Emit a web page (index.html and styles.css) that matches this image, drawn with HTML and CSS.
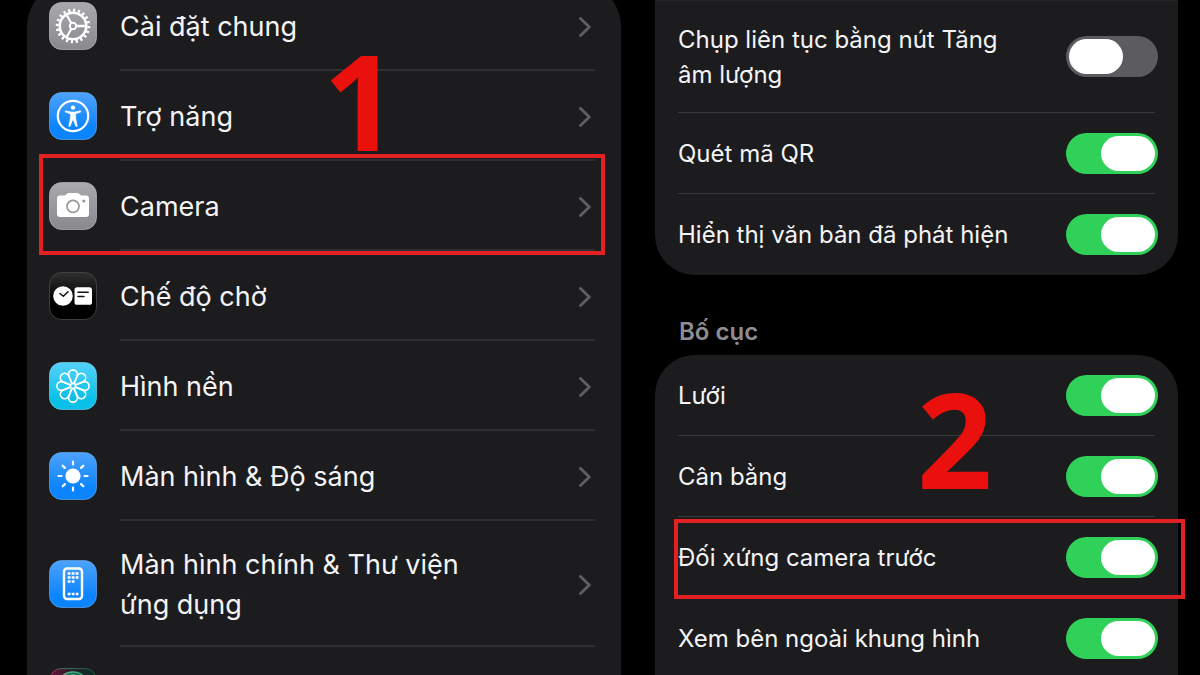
FILE: index.html
```html
<!DOCTYPE html>
<html lang="vi">
<head>
<meta charset="utf-8">
<meta name="viewport" content="width=device-width, initial-scale=1">
<title>Cài đặt Camera</title>
<link rel="stylesheet" href="styles.css">
</head>
<body>
<svg class="defs" width="0" height="0" aria-hidden="true">
  <defs>
    <linearGradient id="gray" x1="0" y1="0" x2="0" y2="1"><stop offset="0" stop-color="#a9a9ae"/><stop offset="1" stop-color="#88888d"/></linearGradient>
    <linearGradient id="blue" x1="0" y1="0" x2="0" y2="1"><stop offset="0" stop-color="#4da3fb"/><stop offset="0.75" stop-color="#0b84fe"/></linearGradient>
    <linearGradient id="cyan" x1="0" y1="0" x2="0" y2="1"><stop offset="0" stop-color="#55d2fa"/><stop offset="0.8" stop-color="#08c0e8"/></linearGradient>
    <linearGradient id="black" x1="0" y1="0" x2="0" y2="1"><stop offset="0" stop-color="#303031"/><stop offset="0.6" stop-color="#000"/></linearGradient>
    <linearGradient id="siri" x1="0" y1="0" x2="1" y2="0"><stop offset="0" stop-color="#6b0f38"/><stop offset="0.5" stop-color="#24222a"/><stop offset="1" stop-color="#0c2a26"/></linearGradient>
    <linearGradient id="glow" x1="0" y1="0" x2="1" y2="0"><stop offset="0" stop-color="#d0537c"/><stop offset="0.35" stop-color="#4fb98b"/><stop offset="1" stop-color="#1c9468"/></linearGradient>
    <symbol id="chevron" viewBox="0 0 12 20"><path d="M1.500 1.500L10.300 10L1.500 18.500" fill="none" stroke="#5f5f63" stroke-width="2.900" stroke-linecap="round" stroke-linejoin="round"/></symbol>
  </defs>
</svg>
<main class="screens">
  <nav class="card card-menu" aria-label="Cài đặt">
    <a class="item" href="#general">
      <svg class="icon" viewBox="0 0 48 48" aria-hidden="true">
        <rect x=".5" y=".5" width="47" height="47" rx="12" fill="url(#gray)" stroke="#b9b9be" stroke-opacity=".7"/>
        <g fill="none" stroke="#fff">
          <circle cx="24" cy="24" r="15.800" stroke-width="3" pathLength="40" stroke-dasharray="0.900 1.100"/>
          <circle cx="24" cy="24" r="13.300" stroke-width="2.600"/>
          <circle cx="24" cy="24" r="3.200" stroke-width="2"/>
          <path d="M27.500 24H37M22.200 21L17.500 12.800M22.200 27L17.500 35.200" stroke-width="2.300"/>
        </g>
      </svg>
      <span class="item-body"><span class="item-label">Cài đặt chung</span><svg class="chevron" aria-hidden="true"><use href="#chevron"/></svg></span>
    </a>
    <a class="item" href="#accessibility">
      <svg class="icon" viewBox="0 0 48 48" aria-hidden="true">
        <rect x=".5" y=".5" width="47" height="47" rx="12" fill="url(#blue)" stroke="#6cb3fb" stroke-opacity=".6"/>
        <circle cx="24" cy="24" r="15.200" fill="none" stroke="#fff" stroke-width="2.200"/>
        <circle cx="24" cy="15.600" r="2.200" fill="#fff"/>
        <path d="M16.500 18.800L22.300 20H25.700L31.500 18.800L31.800 20L26.600 21.800V26L28.300 34.200L27 34.500L24.300 27.800H23.700L21 34.500L19.700 34.200L21.400 26V21.800L16.200 20Z" fill="#fff" stroke="#fff" stroke-width=".6" stroke-linejoin="round"/>
      </svg>
      <span class="item-body"><span class="item-label">Trợ năng</span><svg class="chevron" aria-hidden="true"><use href="#chevron"/></svg></span>
    </a>
    <a class="item item-marked" href="#camera">
      <svg class="icon" viewBox="0 0 48 48" aria-hidden="true">
        <rect x=".5" y=".5" width="47" height="47" rx="12" fill="url(#gray)" stroke="#b9b9be" stroke-opacity=".7"/>
        <path d="M11 13.500H15.500C17 13.500 17.600 11 19.500 11H28.500C30.400 11 31 13.500 32.500 13.500H37Q40 13.500 40 16.500V32Q40 35 37 35H11Q8 35 8 32V16.500Q8 13.500 11 13.500Z" fill="#fff"/>
        <circle cx="24" cy="24.300" r="6" fill="none" stroke="#96969b" stroke-width="1.700"/>
        <circle cx="34.800" cy="19" r="1.600" fill="#96969b"/>
      </svg>
      <span class="item-body"><span class="item-label">Camera</span><svg class="chevron" aria-hidden="true"><use href="#chevron"/></svg></span>
    </a>
    <a class="item" href="#standby">
      <svg class="icon" viewBox="0 0 48 48" aria-hidden="true">
        <rect x=".5" y=".5" width="47" height="47" rx="12" fill="url(#black)" stroke="#4a4a4c" stroke-opacity=".8"/>
        <circle cx="14" cy="24" r="9.800" fill="#fff"/>
        <rect x="25.500" y="15.200" width="17.500" height="17.600" rx="2.600" fill="#fff"/>
        <path d="M11 21.500L14.300 24.300L19 19.700M29 20.200H39.200M29 24.600H35" fill="none" stroke="#111" stroke-width="1.500" stroke-linecap="round" stroke-linejoin="round"/>
      </svg>
      <span class="item-body"><span class="item-label">Chế độ chờ</span><svg class="chevron" aria-hidden="true"><use href="#chevron"/></svg></span>
    </a>
    <a class="item" href="#wallpaper">
      <svg class="icon" viewBox="0 0 48 48" aria-hidden="true">
        <rect x=".5" y=".5" width="47" height="47" rx="12" fill="url(#cyan)" stroke="#7be0fb" stroke-opacity=".6"/>
        <defs><path id="petal" d="M23 21.500C22.300 18.500 19.600 16 19.600 12.300A4.400 4.400 0 0 1 28.400 12.300C28.400 16 25.700 18.500 25 21.500"/></defs>
        <g fill="none" stroke="#fff" stroke-width="1.600">
          <use href="#petal"/><use href="#petal" transform="rotate(45 24 24)"/><use href="#petal" transform="rotate(90 24 24)"/><use href="#petal" transform="rotate(135 24 24)"/><use href="#petal" transform="rotate(180 24 24)"/><use href="#petal" transform="rotate(225 24 24)"/><use href="#petal" transform="rotate(270 24 24)"/><use href="#petal" transform="rotate(315 24 24)"/>
          <circle cx="24" cy="24" r="2.500"/>
        </g>
      </svg>
      <span class="item-body"><span class="item-label">Hình nền</span><svg class="chevron" aria-hidden="true"><use href="#chevron"/></svg></span>
    </a>
    <a class="item" href="#display">
      <svg class="icon" viewBox="0 0 48 48" aria-hidden="true">
        <rect x=".5" y=".5" width="47" height="47" rx="12" fill="url(#blue)" stroke="#6cb3fb" stroke-opacity=".6"/>
        <circle cx="24" cy="24" r="7.600" fill="#fff"/>
        <path d="M24 9.500V12.500M24 35.500V38.500M9.500 24H12.500M35.500 24H38.500M13.700 13.700L15.900 15.900M32.100 32.100L34.300 34.300M13.700 34.300L15.900 32.100M32.100 15.900L34.300 13.700" stroke="#fff" stroke-width="2.200" stroke-linecap="round"/>
      </svg>
      <span class="item-body"><span class="item-label">Màn hình &amp; Độ sáng</span><svg class="chevron" aria-hidden="true"><use href="#chevron"/></svg></span>
    </a>
    <a class="item item-tall" href="#home">
      <svg class="icon" viewBox="0 0 48 48" aria-hidden="true">
        <rect x=".5" y=".5" width="47" height="47" rx="12" fill="url(#blue)" stroke="#6cb3fb" stroke-opacity=".6"/>
        <rect x="15" y="8.500" width="18" height="30.500" rx="3" fill="none" stroke="#fff" stroke-width="2.400"/>
        <path d="M18.700 13.500H29.500M18.700 17.500H29.500M18.700 21.500H25.500M18.700 34H29.500" stroke="#fff" stroke-width="2.400" stroke-dasharray="2.800 1.200"/>
      </svg>
      <span class="item-body"><span class="item-label">Màn hình chính &amp; Thư viện ứng dụng</span><svg class="chevron" aria-hidden="true"><use href="#chevron"/></svg></span>
    </a>
    <a class="item" href="#siri" aria-label="Siri">
      <svg class="icon" viewBox="0 0 48 48" aria-hidden="true">
        <rect x=".5" y=".5" width="47" height="47" rx="12" fill="url(#siri)" stroke="url(#glow)" stroke-opacity=".5"/>
        <circle cx="24" cy="20" r="16" fill="#1d5c4c" stroke="url(#glow)" stroke-width="1.500"/>
        <circle cx="24" cy="20" r="13.500" fill="none" stroke="url(#glow)"/>
      </svg>
      <span class="item-body"></span>
    </a>
    <strong class="step step-one">1</strong>
  </nav>

  <section class="camera">
    <div class="card card-top">
      <div class="option option-tall"><label for="burst">Chụp liên tục bằng nút Tăng âm lượng</label><input class="switch" id="burst" type="checkbox" role="switch"></div>
      <div class="option"><label for="qr">Quét mã QR</label><input class="switch" id="qr" type="checkbox" role="switch" checked></div>
      <div class="option"><label for="text">Hiển thị văn bản đã phát hiện</label><input class="switch" id="text" type="checkbox" role="switch" checked></div>
    </div>
    <h2 class="heading">Bố cục</h2>
    <div class="card card-layout">
      <div class="option"><label for="grid">Lưới</label><input class="switch" id="grid" type="checkbox" role="switch" checked></div>
      <div class="option"><label for="level">Cân bằng</label><input class="switch" id="level" type="checkbox" role="switch" checked></div>
      <div class="option option-marked"><label for="mirror">Đối xứng camera trước</label><input class="switch" id="mirror" type="checkbox" role="switch" checked></div>
      <div class="option"><label for="outside">Xem bên ngoài khung hình</label><input class="switch" id="outside" type="checkbox" role="switch" checked></div>
      <strong class="step step-two">2</strong>
    </div>
  </section>
</main>
</body>
</html>
```
FILE: styles.css
```css
* {
  box-sizing: border-box;
}

body {
  margin: 0;
  background: #000;
  color: #f4f4f6;
  font-family: Inter, "Noto Sans", sans-serif;
}

.defs {
  position: absolute;
}

.screens {
  display: grid;
  grid-template-columns: 594fr 523fr;
  gap: 34px;
  height: 100vh;
  padding: 0 22px 0 27px;
  overflow: hidden;
}

.card {
  position: relative;
  background: #1c1c1e;
}

/* Settings menu */

.card-menu {
  margin-top: -19px;
  border-radius: 46px 46px 0 0;
}

.item {
  position: relative;
  display: flex;
  align-items: center;
  gap: 23px;
  height: 90px;
  padding: 0 26px 0 22px;
  color: inherit;
  text-decoration: none;
}

.item-tall {
  height: 126px;
}

.icon {
  flex: none;
  width: 48px;
  height: 48px;
}

.item-body {
  flex: 1;
  align-self: stretch;
  display: flex;
  align-items: center;
  justify-content: space-between;
  padding: 4px 4px 0 0;
  border-bottom: 2px solid #303032;
}

.item-label {
  max-width: 360px;
  font-size: 27px;
  line-height: 40px;
}

.chevron {
  flex: none;
  width: 12px;
  height: 20px;
}

/* Camera options */

.card-top {
  border-top: 1px solid #262628;
  border-radius: 0 0 40px 40px;
}

.card-layout {
  border-radius: 40px 40px 0 0;
}

.option {
  position: relative;
  display: flex;
  align-items: center;
  justify-content: space-between;
  height: 81px;
  margin: 0 23px;
  border-bottom: 1px solid #38383a;
}

.option:last-of-type {
  border-bottom-color: transparent;
}

.option-tall {
  height: 112px;
}

.option label {
  max-width: 350px;
  font-size: 24px;
  line-height: 35px;
}

.switch {
  flex: none;
  width: 92px;
  height: 41px;
  margin: 0 -3px 0 0;
  padding: 3px;
  appearance: none;
  border-radius: 21px;
  background: #5b5b60;
}

.switch::before {
  content: "";
  display: block;
  width: 54px;
  height: 35px;
  border-radius: 18px;
  background: #fff;
}

.switch:checked {
  background: #30d158;
}

.switch:checked::before {
  margin-left: auto;
}

.heading {
  margin: 0;
  padding: 34px 24px 0;
  color: #8d8d93;
  font-size: 24px;
  font-weight: 600;
  line-height: 46px;
}

/* Step markers */

.item-marked::after,
.option-marked::after {
  content: "";
  position: absolute;
  border: 4px solid #e32022;
  pointer-events: none;
}

.item-marked::after {
  inset: -7px 16px -4px 12px;
}

.option-marked::after {
  inset: 2px -30px -2px -4px;
}

.step {
  position: absolute;
  color: #e9100d;
  font-family: "Open Sans", sans-serif;
  font-size: 132px;
  font-weight: 700;
  line-height: 132px;
  pointer-events: none;
}

.step-one {
  top: 53px;
  left: 296px;
}

.step-two {
  top: 17px;
  left: 262px;
}
```
